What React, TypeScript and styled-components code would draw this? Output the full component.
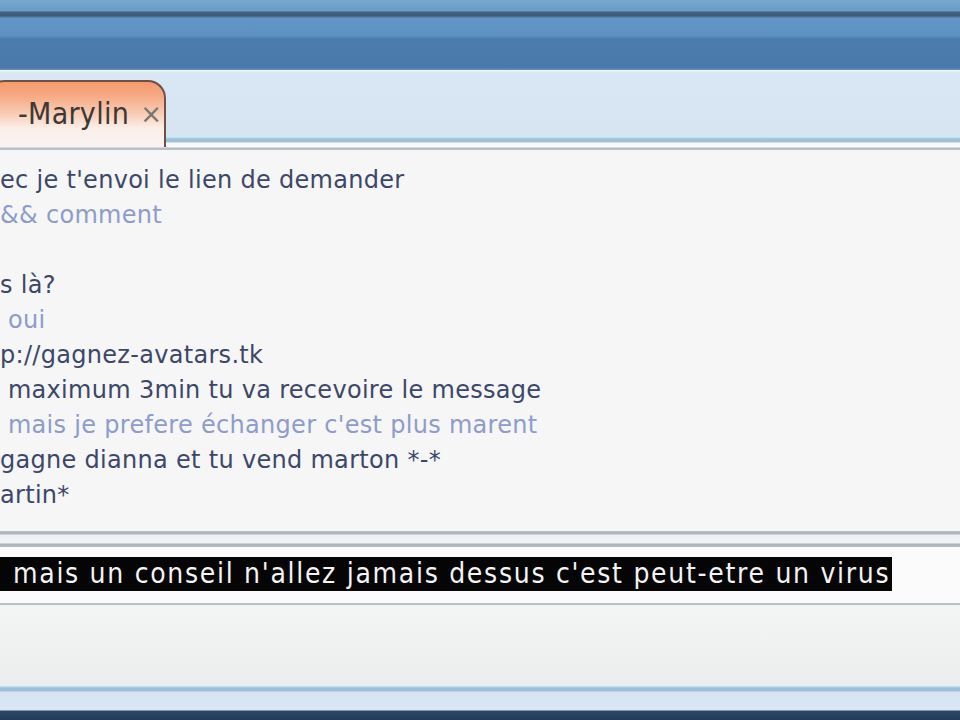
import React from "react";
import styled, { createGlobalStyle } from "styled-components";

const Global = createGlobalStyle`
  html, body { margin: 0; padding: 0; background: #f6f6f6; }
  #root { width: 960px; height: 720px; overflow: hidden; }
`;

const Window = styled.div`
  width: 960px;
  height: 720px;
  display: flex;
  flex-direction: column;
  overflow: hidden;
  font-family: "DejaVu Sans", "Liberation Sans", sans-serif;
`;

const TitleBar = styled.div`
  height: 70px;
  flex: none;
  background: linear-gradient(
    to bottom,
    #74a8d0 0px,
    #6a9dc6 11px,
    #46627f 12px,
    #3e5a76 16px,
    #6396c6 18px,
    #5c91c3 36px,
    #4b7cad 39px,
    #4979aa 68px,
    #6f97bf 70px
  );
`;

const TabStrip = styled.div`
  height: 80px;
  flex: none;
  display: flex;
  align-items: flex-start;
  padding-top: 10px;
  box-sizing: border-box;
  background: linear-gradient(
    to bottom,
    #eef6fc 0px,
    #d9e7f4 3px,
    #d7e5f3 66px,
    #c6ebf8 67px,
    #9fc0d6 69px,
    #a2c2d8 72px,
    #f8fafb 73px,
    #fafafa 77px,
    #b3bbc4 78px,
    #bcc3ca 80px
  );
`;

const Tab = styled.div`
  margin-left: -14px;
  width: 180px;
  height: 67px;
  box-sizing: border-box;
  border: 2px solid #6e5048;
  border-bottom: none;
  border-radius: 18px 18px 0 0;
  background: linear-gradient(
    to bottom,
    #f59a6c 0px,
    #f6aa84 14px,
    #f9cdb6 32px,
    #fbeee8 46px,
    #f8f5f3 67px
  );
  display: flex;
  align-items: flex-start;
  padding: 14px 0 0 30px;
  gap: 11px;
`;

const TabLabel = styled.span`
  font-family: "DejaVu Sans Condensed", "DejaVu Sans", sans-serif;
  font-size: 30px;
  line-height: 36px;
  color: #3b3835;
  letter-spacing: 0.3px;
`;

const TabClose = styled.span`
  font-family: "DejaVu Sans", sans-serif;
  font-size: 26px;
  color: #7a7470;
  line-height: 36px;
`;

const ChatLog = styled.div`
  height: 381px;
  flex: none;
  background: #f6f6f6;
  padding-top: 13px;
  box-sizing: border-box;
  display: flex;
  flex-direction: column;
`;

const Line = styled.div<{ $light?: boolean }>`
  height: 35px;
  line-height: 35px;
  font-family: "DejaVu Sans", sans-serif;
  font-size: 24px;
  letter-spacing: 0.3px;
  white-space: pre;
  color: ${(p) => (p.$light ? "#8d9ccb" : "#3c4769")};
`;

const Divider = styled.div`
  height: 16px;
  flex: none;
  background: linear-gradient(
    to bottom,
    #b8bfc6 0px,
    #aab2ba 3px,
    #eef1f4 4px,
    #f1f3f5 12px,
    #a9b1b9 13px,
    #b5bcc3 16px
  );
`;

const InputBox = styled.div`
  height: 58px;
  flex: none;
  background: #fbfbfb;
  border-bottom: 2px solid #b9c0c6;
  padding-top: 10px;
  box-sizing: border-box;
  display: flex;
  align-items: flex-start;
`;

const Subtitle = styled.span`
  display: inline-block;
  background: #050505;
  color: #f4f4f4;
  font-family: "DejaVu Sans Condensed", "DejaVu Sans", sans-serif;
  font-size: 28px;
  line-height: 34px;
  height: 34px;
  padding: 0 2px 0 13px;
  letter-spacing: 1.7px;
  white-space: pre;
`;

const Toolbar = styled.div`
  height: 81px;
  flex: none;
  background: linear-gradient(to bottom, #f3f4f4, #eceeee);
`;

const StatusBar = styled.div`
  flex: 1;
  background: linear-gradient(
    to bottom,
    #c8edf8 0px,
    #9dc0d8 2px,
    #9ec0d8 5px,
    #d7e5f2 6px,
    #d9e6f3 24px,
    #2e4668 25px,
    #233a5c 34px
  );
`;

const lines: { text: string; light?: boolean }[] = [
  { text: "ec je t'envoi le lien de demander" },
  { text: "&& comment", light: true },
  { text: "" },
  { text: "s là?" },
  { text: " oui", light: true },
  { text: "p://gagnez-avatars.tk" },
  { text: " maximum 3min tu va recevoire le message" },
  { text: " mais je prefere échanger c'est plus marent", light: true },
  { text: "gagne dianna et tu vend marton *-*" },
  { text: "artin*" },
];

export default function App() {
  return (
    <Window>
      <Global />
      <TitleBar />
      <TabStrip>
        <Tab>
          <TabLabel>-Marylin</TabLabel>
          <TabClose>×</TabClose>
        </Tab>
      </TabStrip>
      <ChatLog>
        {lines.map((l, i) => (
          <Line key={i} $light={l.light}>
            {l.text}
          </Line>
        ))}
      </ChatLog>
      <Divider />
      <InputBox>
        <Subtitle>mais un conseil n'allez jamais dessus c'est peut-etre un virus</Subtitle>
      </InputBox>
      <Toolbar />
      <StatusBar />
    </Window>
  );
}
